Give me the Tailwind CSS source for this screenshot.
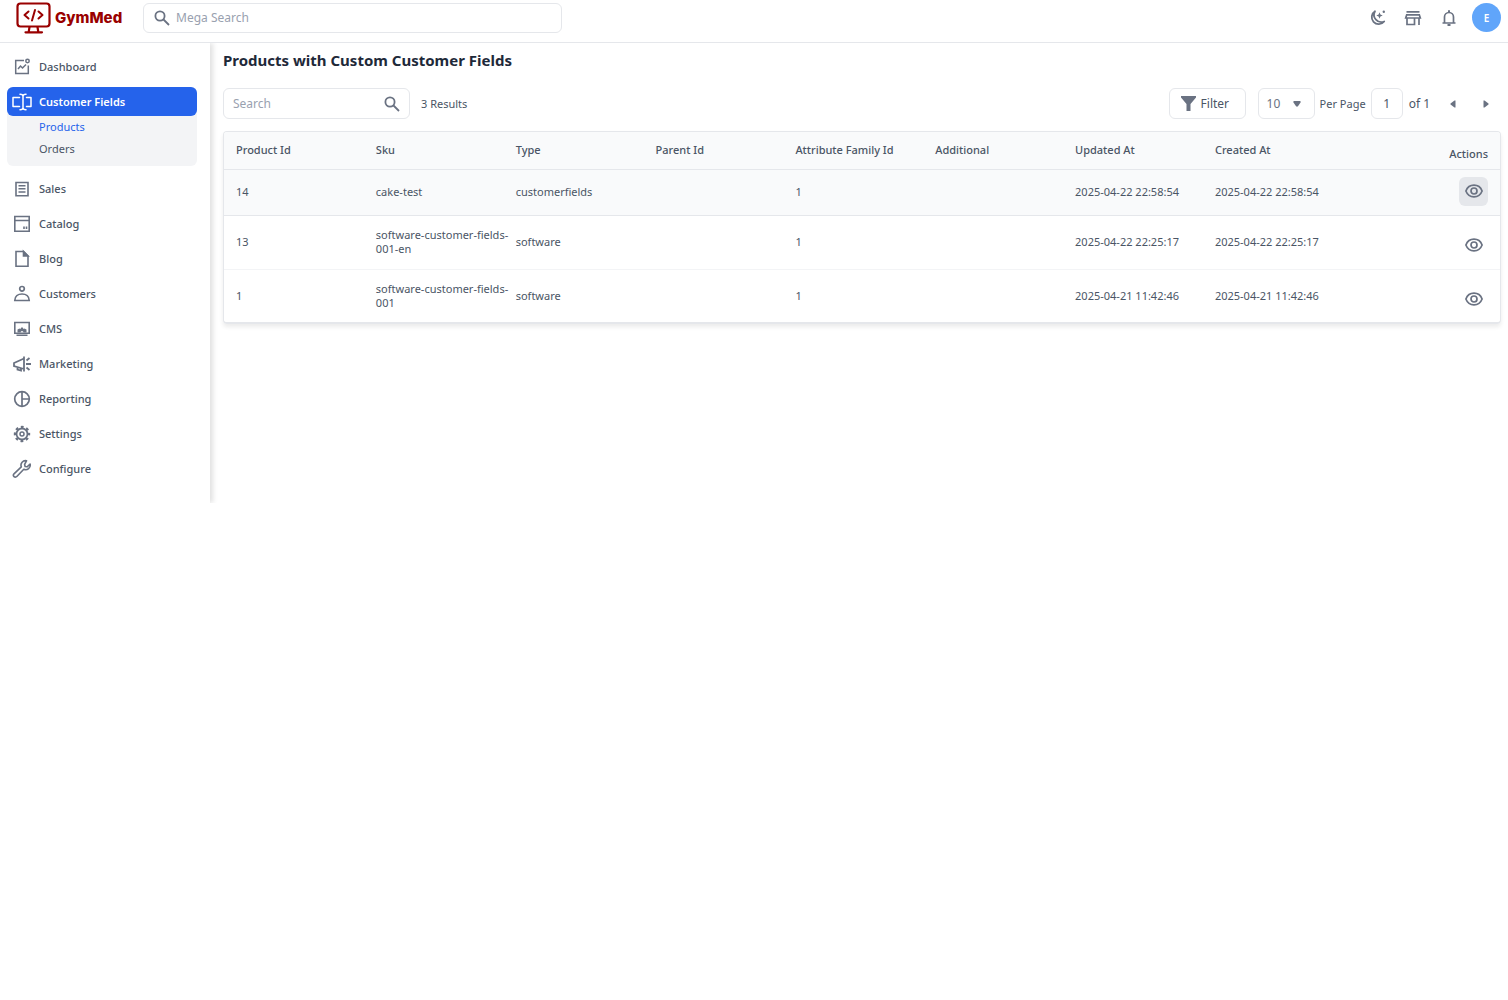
<!DOCTYPE html>
<html lang="en">
<head>
    <meta charset="UTF-8">
    <meta name="viewport" content="width=device-width, initial-scale=1.0">
    <title>Products with Custom Customer Fields</title>
    <script src="https://cdn.jsdelivr.net/npm/@tailwindcss/browser@4"></script>
</head>
<body class="bg-white font-['Noto_Sans','Open_Sans',sans-serif] text-[11px] leading-[14px] text-gray-600">
    <header class="flex h-[43px] items-center border-b border-gray-200 pr-[7px] pb-[7px] pl-4">
        <a href="#" class="flex w-[127px] items-center gap-1 text-[#990000]">
            <svg class="h-8 w-[35px] shrink-0" viewBox="0 0 35 32" fill="none" stroke="currentColor" stroke-width="2.2" stroke-linecap="round" stroke-linejoin="round">
                <rect x="1.500" y="1.500" width="32" height="23" rx="3"/>
                <path d="M13.500 25l-.8 5M21.500 25l.8 5M9.500 30.300h16.500"/>
                <path d="M12.500 9.500L8.500 13l4 3.500M22.500 9.500l4 3.500-4 3.500M19 8l-3 10.500" stroke-width="2"/>
            </svg>
            <span class="font-[Inter,sans-serif] text-[15px] leading-5 font-extrabold">GymMed</span>
        </a>
        <form class="flex h-[30px] w-[419px] items-center gap-[6px] rounded-md border border-gray-200 px-[10px]">
            <svg class="size-4 shrink-0 text-gray-500" viewBox="0 0 16 16" fill="none" stroke="currentColor" stroke-width="1.800"><circle cx="6" cy="6" r="4.600"/><path d="M9.500 9.500l5.500 5.500"/></svg>
            <input type="text" aria-label="Mega Search" placeholder="Mega Search" class="w-full text-[12px] leading-4 outline-none placeholder:text-gray-400">
        </form>
        <div class="ml-auto flex items-center gap-[18px] text-gray-500">
            <button type="button" aria-label="Dark mode">
                <svg class="size-[18px]" viewBox="0 0 18 18" fill="none" stroke="currentColor" stroke-width="1.800" stroke-linejoin="round"><path d="M7 2.200A7 7 0 1 0 16.200 12.500 7.300 7.300 0 0 1 7 2.200z"/><path d="M11.500 3.300l.9 2.300 2.300.9-2.300.9-.9 2.300-.9-2.300-2.300-.9 2.300-.9z" fill="currentColor" stroke="none"/><circle cx="15.800" cy="2.800" r="1.200" fill="currentColor" stroke="none"/></svg>
            </button>
            <a href="#" aria-label="Visit shop">
                <svg class="size-[18px]" viewBox="0 0 18 18" fill="none" stroke="currentColor" stroke-width="1.700"><path d="M2.500 2.800h13M2.700 5.800h12.600l1 3.200H1.700zM3 9v6.500h7.500V9M15 9v7"/></svg>
            </a>
            <button type="button" aria-label="Notifications">
                <svg class="size-[18px]" viewBox="0 0 18 18" fill="none" stroke="currentColor" stroke-width="1.700"><path d="M4.500 14V8a4.500 4.500 0 0 1 9 0v6M2.500 14h13"/><path d="M7.500 16h3M9 1.300v2" stroke-width="2"/></svg>
            </button>
            <button type="button" class="-ml-1 size-[29px] rounded-full bg-[#60a5fa] text-[10px] font-semibold text-white">E</button>
        </div>
    </header>

    <div class="flex items-start">
        <nav class="flex w-[210px] shrink-0 flex-col gap-[6px] pt-[9px] pr-[13px] pb-5 pl-[7px] font-medium text-gray-600 shadow-[3px_0_5px_rgba(0,0,0,0.12)] [clip-path:inset(0_-10px_0_0)]">
            <a href="#" class="flex h-[29px] items-center gap-[7px] px-[5px]">
                <svg class="size-5 text-gray-500" viewBox="0 0 20 20" fill="none" stroke="currentColor" stroke-width="1.500"><path d="M12 3.500H3.700v13h12.600V8.500"/><path d="M6 12l2.500-3 2 2L14 7.500"/><circle cx="15.500" cy="4" r="1.700"/></svg>
                Dashboard
            </a>
            <div class="mb-0.5 rounded-md bg-gray-100">
                <a href="#" class="flex h-[29px] items-center gap-[7px] rounded-md bg-[#2563eb] px-[5px] font-semibold text-white">
                    <svg class="size-5" viewBox="0 0 20 20" fill="none" stroke="currentColor" stroke-width="1.500" stroke-linecap="round" stroke-linejoin="round"><path d="M7.500 5.500H1v9h6.500M14.500 5.500H19v9h-4.500M11 4v12M8 2.200c2 0 3 .6 3 2 0-1.400 1-2 3-2M8 17.800c2 0 3-.6 3-2 0 1.400 1 2 3 2"/></svg>
                    Customer Fields
                </a>
                <div class="grid gap-2 pt-1 pb-[10px] pl-8 font-normal">
                    <a href="#" class="text-[#2563eb]">Products</a>
                    <a href="#">Orders</a>
                </div>
            </div>
            <a href="#" class="flex h-[29px] items-center gap-[7px] px-[5px]">
                <svg class="size-5 text-gray-500" viewBox="0 0 20 20" fill="none" stroke="currentColor" stroke-width="1.600"><path d="M4 3.500h12v13.200H4z"/><path d="M6.500 6.700h7M6.500 9.800h7M6.500 13h7"/></svg>
                Sales
            </a>
            <a href="#" class="flex h-[29px] items-center gap-[7px] px-[5px]">
                <svg class="size-5 text-gray-500" viewBox="0 0 20 20" fill="none" stroke="currentColor" stroke-width="1.600"><path d="M2.800 2.500h14.400v14.700H2.800zM2.800 6.500h14.400M12 12.500v2.500M14.500 12.500v2.500"/></svg>
                Catalog
            </a>
            <a href="#" class="flex h-[29px] items-center gap-[7px] px-[5px]">
                <svg class="size-5 text-gray-500" viewBox="0 0 20 20" fill="none" stroke="currentColor" stroke-width="1.600"><path d="M4 2.500h7.500L16 7v10.200H4z"/><path d="M11.500 2.500V7H16z" fill="currentColor"/></svg>
                Blog
            </a>
            <a href="#" class="flex h-[29px] items-center gap-[7px] px-[5px]">
                <svg class="size-5 text-gray-500" viewBox="0 0 20 20" fill="none" stroke="currentColor" stroke-width="1.700"><circle cx="10" cy="4.800" r="2.300"/><path d="M2.800 16.500c0-4 3.200-6.500 7.200-6.500s7.200 2.500 7.200 6.500z"/></svg>
                Customers
            </a>
            <a href="#" class="flex h-[29px] items-center gap-[7px] px-[5px]">
                <svg class="size-5 text-gray-500" viewBox="0 0 20 20" fill="none" stroke="currentColor" stroke-width="1.600"><path d="M2.800 3.500h14.400v10.700H2.800zM4.500 16.200h11"/><path d="M5.500 13.500v-3l2-1 .8.500L10 8l1.700 2 .8-.5 2 1v3h-3a1.500 1.500 0 0 0-3 0z" fill="currentColor" stroke="none"/></svg>
                CMS
            </a>
            <a href="#" class="flex h-[29px] items-center gap-[7px] px-[5px]">
                <svg class="size-5 text-gray-500" viewBox="0 0 20 20" fill="none" stroke="currentColor" stroke-width="1.800"><path d="M12 2.500v15M12 4.500L2 9v3l10 3M5.500 13v2.500l3.500 1v-2.500M14 10h5M14.500 6.500L17.500 4M14.500 13.500l3 2.500"/></svg>
                Marketing
            </a>
            <a href="#" class="flex h-[29px] items-center gap-[7px] px-[5px]">
                <svg class="size-5 text-gray-500" viewBox="0 0 20 20" fill="none" stroke="currentColor" stroke-width="1.700"><circle cx="10" cy="10" r="7.300"/><path d="M10 2.700v14.600M10 10h7.300"/></svg>
                Reporting
            </a>
            <a href="#" class="flex h-[29px] items-center gap-[7px] px-[5px]">
                <svg class="size-5 text-gray-500" viewBox="0 0 20 20" fill="none" stroke="currentColor"><circle cx="10" cy="10" r="5.500" stroke-width="1.800"/><circle cx="10" cy="10" r="2" stroke-width="1.500"/><circle cx="10" cy="10" r="7" stroke-width="2.400" stroke-dasharray="2.750 2.748" stroke-dashoffset="1.370"/></svg>
                Settings
            </a>
            <a href="#" class="flex h-[29px] items-center gap-[7px] px-[5px]">
                <svg class="size-5 text-gray-500" viewBox="0 0 20 20" fill="none" stroke="currentColor" stroke-width="1.600" stroke-linejoin="round"><path d="M14.500 1.800a4.500 4.500 0 0 0-5.200 6L2 14.800a1.800 1.800 0 0 0 2.800 2.700l7-7.200a4.600 4.600 0 0 0 6.300-5.300l-3 2.800-2-.3-.5-2.200z"/></svg>
                Configure
            </a>
        </nav>

        <main class="min-w-0 flex-1 pt-[7px] pr-[7px] pl-[13px]">
            <h1 class="text-[15px] leading-5 font-bold text-gray-800">Products with Custom Customer Fields</h1>

            <div class="mt-[18px] flex items-center">
                <div class="flex h-[31px] w-[187px] items-center rounded-md border border-gray-200 px-[9px]">
                    <input type="text" aria-label="Search" placeholder="Search" class="w-full min-w-0 text-[12px] leading-4 outline-none placeholder:text-gray-400">
                    <svg class="size-4 shrink-0 text-gray-500" viewBox="0 0 16 16" fill="none" stroke="currentColor" stroke-width="1.800"><circle cx="6" cy="6" r="4.600"/><path d="M9.500 9.500l5.500 5.500"/></svg>
                </div>
                <p class="ml-[11px]">3 Results</p>
                <button type="button" class="ml-auto flex h-[31px] w-[77px] items-center gap-[5px] rounded-md border border-gray-200 pl-[11px] text-[12px]">
                    <svg class="size-[15px] text-gray-500" viewBox="0 0 15 15" fill="currentColor"><path d="M0 0h15v1.500L9.500 8v7h-4V8L0 1.500z"/></svg>
                    Filter
                </button>
                <div class="relative ml-3">
                    <select id="perPage" class="h-[31px] w-[57px] appearance-none rounded-md border border-gray-200 pl-2 text-[12px] text-gray-500">
                        <option>10</option>
                        <option>20</option>
                        <option>50</option>
                    </select>
                    <svg class="pointer-events-none absolute top-[13px] right-[14px] h-[6px] w-2 text-gray-500" viewBox="0 0 8 6" fill="currentColor"><path d="M.5 0h7v1.500L4.800 5.500H3.200L.5 1.500z"/></svg>
                </div>
                <label for="perPage" class="ml-[5px]">Per Page</label>
                <input type="text" value="1" aria-label="Page" class="ml-[5px] h-[31px] w-8 rounded-md border border-gray-200 text-center text-[12px] outline-none">
                <span class="ml-[6px] text-[12px]">of 1</span>
                <div class="ml-5 flex gap-[27px] pr-3 text-gray-500">
                    <button type="button" aria-label="Previous page"><svg class="h-2 w-[6px]" viewBox="0 0 6 8" fill="currentColor"><path d="M5.500 .5v7H4.500L.5 4.500v-1l4-3z"/></svg></button>
                    <button type="button" aria-label="Next page"><svg class="h-2 w-[6px]" viewBox="0 0 6 8" fill="currentColor"><path d="M.5 .5v7h1l4-3v-1l-4-3z"/></svg></button>
                </div>
            </div>

            <div class="mt-3 overflow-hidden rounded-sm border border-b-2 border-gray-200 shadow-[0_3px_4px_rgba(0,0,0,0.08)]">
                <table class="w-full table-fixed text-left">
                    <thead>
                        <tr class="h-[37px] border-b border-gray-200 bg-gray-50">
                            <th class="w-[10.96%] pl-3 font-medium">Product Id</th>
                            <th class="w-[10.96%] pl-3 font-medium">Sku</th>
                            <th class="w-[10.96%] pl-3 font-medium">Type</th>
                            <th class="w-[10.96%] pl-3 font-medium">Parent Id</th>
                            <th class="w-[10.96%] pl-3 font-medium">Attribute Family Id</th>
                            <th class="w-[10.96%] pl-3 font-medium">Additional</th>
                            <th class="w-[10.96%] pl-3 font-medium">Updated At</th>
                            <th class="w-[10.96%] pl-3 font-medium">Created At</th>
                            <th class="pr-3 pb-2 text-right align-bottom font-medium">Actions</th>
                        </tr>
                    </thead>
                    <tbody>
                        <tr class="h-[46px] border-b border-gray-200 bg-gray-50">
                            <td class="pl-3">14</td>
                            <td class="pl-3">cake-test</td>
                            <td class="pl-3">customerfields</td>
                            <td></td>
                            <td class="pl-3">1</td>
                            <td></td>
                            <td class="pl-3">2025-04-22 22:58:54</td>
                            <td class="pl-3">2025-04-22 22:58:54</td>
                            <td class="pr-3 pb-[9px] align-bottom">
                                <button type="button" aria-label="View product 14" class="ml-auto flex size-[29px] items-center justify-center rounded-md bg-gray-200 text-gray-500">
                                    <svg class="h-[14px] w-[18px]" viewBox="0 0 18 14" fill="none" stroke="currentColor" stroke-width="1.700"><path d="M.9 7C2.300 3.300 5.300 1.200 9 1.200S15.700 3.300 17.100 7C15.700 10.700 12.700 12.800 9 12.800S2.300 10.700 .9 7z"/><circle cx="9" cy="7" r="3"/></svg>
                                </button>
                            </td>
                        </tr>
                        <tr class="h-[54px] border-b border-gray-100">
                            <td class="pl-3">13</td>
                            <td class="pl-3 whitespace-nowrap">software-customer-fields-<br>001-en</td>
                            <td class="pl-3">software</td>
                            <td></td>
                            <td class="pl-3">1</td>
                            <td></td>
                            <td class="pl-3">2025-04-22 22:25:17</td>
                            <td class="pl-3">2025-04-22 22:25:17</td>
                            <td class="pr-3 pb-[9px] align-bottom">
                                <button type="button" aria-label="View product 13" class="ml-auto flex size-[29px] items-center justify-center rounded-md text-gray-500">
                                    <svg class="h-[14px] w-[18px]" viewBox="0 0 18 14" fill="none" stroke="currentColor" stroke-width="1.700"><path d="M.9 7C2.300 3.300 5.300 1.200 9 1.200S15.700 3.300 17.100 7C15.700 10.700 12.700 12.800 9 12.800S2.300 10.700 .9 7z"/><circle cx="9" cy="7" r="3"/></svg>
                                </button>
                            </td>
                        </tr>
                        <tr class="h-[53px]">
                            <td class="pl-3">1</td>
                            <td class="pl-3 whitespace-nowrap">software-customer-fields-<br>001</td>
                            <td class="pl-3">software</td>
                            <td></td>
                            <td class="pl-3">1</td>
                            <td></td>
                            <td class="pl-3">2025-04-21 11:42:46</td>
                            <td class="pl-3">2025-04-21 11:42:46</td>
                            <td class="pr-3 pb-[9px] align-bottom">
                                <button type="button" aria-label="View product 1" class="ml-auto flex size-[29px] items-center justify-center rounded-md text-gray-500">
                                    <svg class="h-[14px] w-[18px]" viewBox="0 0 18 14" fill="none" stroke="currentColor" stroke-width="1.700"><path d="M.9 7C2.300 3.300 5.300 1.200 9 1.200S15.700 3.300 17.100 7C15.700 10.700 12.700 12.800 9 12.800S2.300 10.700 .9 7z"/><circle cx="9" cy="7" r="3"/></svg>
                                </button>
                            </td>
                        </tr>
                    </tbody>
                </table>
            </div>
        </main>
    </div>
</body>
</html>
